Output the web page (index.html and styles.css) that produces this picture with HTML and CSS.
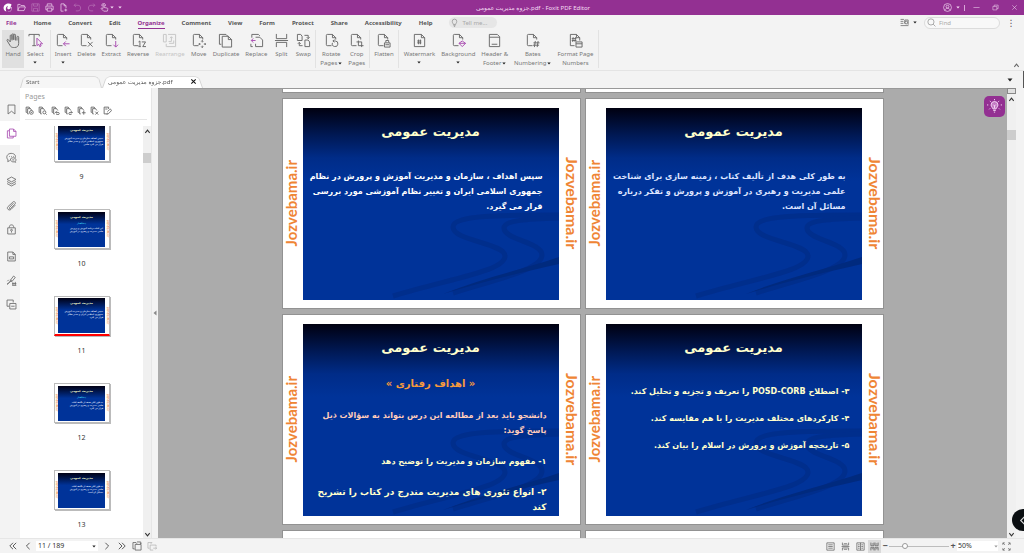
FILE: index.html
```html
<!DOCTYPE html>
<html lang="en">
<head>
<meta charset="utf-8">
<title>جزوه مدیریت عمومی.pdf - Foxit PDF Editor</title>
<link rel="stylesheet" href="styles.css">
</head>
<body>
<svg class="defs" aria-hidden="true">
  <symbol id="doc" viewBox="0 0 16 16"><path d="M8 13.500H3.500a1 1 0 0 1-1-1v-10a1 1 0 0 1 1-1H9l3.500 3.500V7M9 1.500V5h3.500"/></symbol>
  <symbol id="caret" viewBox="0 0 6 4"><path class="fill" d="M.5.5h5L3 3.500z"/></symbol>
  <symbol id="chev-l" viewBox="0 0 10 10"><path d="M7 1 3 5l4 4"/></symbol>
  <symbol id="chev-r" viewBox="0 0 10 10"><path d="m3 1 4 4-4 4"/></symbol>
  <symbol id="dchev-l" viewBox="0 0 10 10"><path d="M5 1 1 5l4 4M9 1 5 5l4 4"/></symbol>
  <symbol id="dchev-r" viewBox="0 0 10 10"><path d="m1 1 4 4-4 4M5 1l4 4-4 4"/></symbol>
  <symbol id="up" viewBox="0 0 8 8"><path d="m1.500 5.500 2.500-3 2.500 3"/></symbol>
  <symbol id="down" viewBox="0 0 8 8"><path d="m1.500 2.500 2.500 3 2.500-3"/></symbol>
  <symbol id="hand" viewBox="0 0 16 16"><path d="M4.500 9.500 2.600 7.200c-.8-.9-2 0-1.400 1l3 5c.8 1.500 2 2.300 4 2.300h1c2.600 0 4.300-1.600 4.300-4.300V4.500c0-1.300-1.800-1.300-1.800 0V8M4.500 9.500V3c0-1.300 1.900-1.300 1.900 0v5M6.400 7V1.800c0-1.300 1.900-1.300 1.900 0V7.500M8.300 7V2.300c0-1.300 1.900-1.300 1.900 0V8"/></symbol>
  <symbol id="bulb" viewBox="0 0 16 16"><path d="M6 11.500C6 10 4 9 4 6a4 4 0 0 1 8 0c0 3-2 4-2 5.500zM6.200 13.500h3.600M7 15.200h2"/></symbol>
  <symbol id="swoosh" viewBox="0 0 256 192"><path d="M256 107C200 107 150 107 150 119c0 14 52 16 52 29 0 15-52 22-112 40"/><path d="M256 110c-31 1-55 2-55 10 0 12 38 14 38 27 0 15-49 25-89 38"/><path class="swoosh-strong" d="M256 149c-38 13-77 21-116 37 42-13 80-22 116-30z"/></symbol>
  <symbol id="mini" viewBox="0 0 12 12"><path d="M2.500 8.500H1.500v-7h4l2 2M5 10.500H3.500v-7H7l2 2V6"/></symbol>
</svg>

<div class="app">
<header class="titlebar">
  <div class="quick">
    <svg class="logo" viewBox="0 0 16 16"><path class="fill" d="M15 2C9-1 1 2 1 9c0 3 2 6 5 6C4 11 5 6 9 5 7 8 7 10 9 11c3 1 4-2 6-3v3c-1 3-4 5-7 4 5 2 8-2 8-7-2-1-3 1-5 1 2-1 4-4 4-7z"/></svg>
    <button aria-label="Open"><svg viewBox="0 0 16 16"><path d="M1.500 13.500v-11h4l1.500 2h6v2.500M1.500 13.500 4 7h11l-2.500 6.500z"/></svg></button>
    <button class="dim" aria-label="Save"><svg viewBox="0 0 16 16"><path d="M1.500 1.500h13v13h-13zM4.500 1.500v4h7v-4M4.500 14.500v-5h7v5"/></svg></button>
    <button aria-label="Print"><svg viewBox="0 0 16 16"><path d="M4 5V1.500h8V5M4 12H1.500V5.500h13V12H12M4 9h8v5.500H4z"/></svg></button>
    <button aria-label="New"><svg viewBox="0 0 16 16"><path d="M8 14.500H3.500v-13H9L12.500 5v4M9 1.500V5h3.500M12 10v5M9.500 12.500h5"/></svg></button>
    <button class="dim" aria-label="Undo"><svg viewBox="0 0 16 16"><path d="M5 1 2 4l3 3M2 4h7c6 0 6 10 0 10H5"/></svg></button>
    <button class="dim" aria-label="Redo"><svg viewBox="0 0 16 16"><path d="m11 1 3 3-3 3M14 4H7C1 4 1 14 7 14h4"/></svg></button>
    <button class="touch" aria-label="Touch mode"><svg viewBox="0 0 16 16"><path d="M5.500 9.500V4c0-1.500 2-1.500 2 0v4l5 1c1.500.3 1.500 1 1.200 2.500l-.7 3H6.500L2 10c0-1.200 1.500-1.500 3.500.5M3.500 5.500C2-1 11-1 9.500 5.500"/></svg><svg class="car"><use href="#caret"/></svg></button>
    <button class="narrow" aria-label="Customize"><svg class="car"><use href="#caret"/></svg></button>
  </div>
  <h1 class="wintitle">جزوه مدیریت عمومی.pdf - Foxit PDF Editor</h1>
  <div class="wincontrols">
    <button aria-label="Account"><svg viewBox="0 0 16 16"><circle cx="8" cy="8" r="7"/><circle cx="8" cy="6.500" r="2.500"/><path d="M3.500 13c1-5 8-5 9 0"/></svg></button>
    <svg class="car"><use href="#caret"/></svg><span class="bar"></span>
    <button aria-label="Minimize"><svg viewBox="0 0 16 16"><path d="M1 8h14"/></svg></button>
    <button aria-label="Restore"><svg viewBox="0 0 16 16"><path d="M2 5.500h9v8H2zM5 5.500v-3h9v8h-3"/></svg></button>
    <button aria-label="Close"><svg viewBox="0 0 16 16"><path d="m3 3 10 10M13 3 3 13"/></svg></button>
  </div>
</header>

<nav class="menubar">
  <button class="file">File</button><button>Home</button><button>Convert</button><button>Edit</button><button class="active">Organize</button><button>Comment</button><button>View</button><button>Form</button><button>Protect</button><button>Share</button><button>Accessibility</button><button>Help</button>
  <label class="tellme"><svg class="ic"><use href="#bulb"/></svg><input type="text" placeholder="Tell me..." aria-label="Tell me"></label>
  <div class="search">
    <svg class="ic" viewBox="0 0 16 16"><path d="M1 2.500h6M1 6h5M1 9.500h5M1 13.500h14M14.500 12V3.500h-6V10"/><circle cx="11" cy="8" r="2.500"/></svg><svg class="car"><use href="#caret"/></svg>
    <label class="find"><svg class="ic" viewBox="0 0 16 16"><circle cx="7" cy="7" r="5.500"/><path d="m11 11 4 4"/></svg><input type="text" placeholder="Find" aria-label="Find"></label>
    <button class="dots" aria-label="More">⋮</button>
  </div>
</nav>

<div class="ribbon">
  <div class="group">
    <button class="tool selected"><svg><use href="#hand"/></svg>Hand</button>
    <button class="tool"><svg viewBox="0 0 16 16"><path d="M1 3.500v-2h11v2M6.500 1.500v12M4.500 13.500h4"/><path class="accent" d="M9.500 5.500v8l2-1.500 1 2.500 1.500-.7-1-2.300h2.500z"/></svg>Select<svg class="car"><use href="#caret"/></svg></button>
  </div>
  <div class="group">
    <button class="tool"><svg viewBox="0 0 16 16"><use href="#doc"/><path class="accent" d="M15.500 11.500H9M11.500 9 9 11.500l2.500 2.500"/></svg>Insert<svg class="car"><use href="#caret"/></svg></button>
    <button class="tool"><svg viewBox="0 0 16 16"><use href="#doc"/><path d="m9.500 9.500 5 5M14.500 9.500l-5 5"/></svg>Delete</button>
    <button class="tool"><svg viewBox="0 0 16 16"><use href="#doc"/><path class="accent" d="M12.500 8.500V15M10 12.500l2.500 2.500 2.500-2.500"/></svg>Extract</button>
    <button class="tool"><svg viewBox="0 0 16 16"><use href="#doc"/><path d="m8 9.500 1.500-1V14M11.500 9.500h4l-3 5h3.500M8 14.500h2.500"/></svg>Reverse</button>
    <button class="tool disabled" disabled><svg viewBox="0 0 16 16"><path d="M1.500 1.500h3v8h-3zM6.500 1.500h8v13h-10v-3M7 9h3V4M8.500 5.500 10 4l1.500 1.500M12.500 8v3h-5"/></svg>Rearrange</button>
    <button class="tool"><svg viewBox="0 0 16 16"><use href="#doc"/><path d="M12 8v2M12 13.500v2M8.300 11.800h2M13.700 11.800h2M11 9l1-1 1 1M11 14.500l1 1 1-1M9.300 10.800l-1 1 1 1M14.700 10.800l1 1-1 1"/></svg>Move</button>
    <button class="tool"><svg viewBox="0 0 16 16"><path d="M3.500 12h-2V1.500h7l2 2M4.500 3.500H11l3.500 3.500v8h-10zM11 3.500V7h3.500"/></svg>Duplicate</button>
    <button class="tool"><svg viewBox="0 0 16 16"><path d="M3 5V1.500h7l1.500 1.500M7 4.500h4.500l3 3v7H7v-3M4 14.500H2v-3"/><path class="accent" d="M7 8H2.500M4.500 5.800 2.500 8l2 2.200"/></svg>Replace</button>
    <button class="tool"><svg viewBox="0 0 16 16"><path d="M2.500 1v5h11V1M2.500 15v-5h11v5M1 8h14"/></svg>Split</button>
    <button class="tool"><svg viewBox="0 0 16 16"><path d="M1.500 1.500H5l1.500 2V8h-5zM9.500 7.500H13l1.500 2v5h-5zM9 2.500h4V6M11.500 4.500 13 6l1.500-1.500M7 13.500H3.500V10M2 11.500 3.500 10 5 11.500"/></svg>Swap</button>
  </div>
  <div class="group">
    <button class="tool"><svg viewBox="0 0 16 16"><use href="#doc"/><path d="M9 10.500a3 3 0 1 0 3-2H9.500M11 7 9.500 8.500 11 10"/></svg>Rotate<span>Pages<svg class="car"><use href="#caret"/></svg></span></button>
    <button class="tool"><svg viewBox="0 0 16 16"><use href="#doc"/><path d="M10 8v5.500h5.500M8 9.500h5.500V15"/></svg>Crop<span>Pages</span></button>
  </div>
  <div class="group">
    <button class="tool"><svg viewBox="0 0 16 16"><use href="#doc"/><path d="M9 15v-4.500h6V15zM10.500 10V8h3v2M10 12.500h4"/></svg>Flatten</button>
  </div>
  <div class="group wide">
    <button class="tool"><svg viewBox="0 0 16 16"><path d="M2.500 1.500H10L13.500 5v9.500h-11zM10 1.500V5h3.500M5.500 8.500h4.500M5.500 10.500h4.500M7 7v5M9 7v5"/></svg>Watermark<svg class="car"><use href="#caret"/></svg></button>
    <button class="tool"><svg viewBox="0 0 16 16"><use href="#doc"/><path class="accent" d="m12 8.500 3.500 2.500-3.500 3.500-3.500-3.500zM8.500 11h7"/></svg>Background<svg class="car"><use href="#caret"/></svg></button>
    <button class="tool"><svg viewBox="0 0 16 16"><path d="M2.500 1.500H11l2.500 2.500v10.500h-11zM2.500 4.500h11M5 12h6"/></svg>Header &amp;<span>Footer<svg class="car"><use href="#caret"/></svg></span></button>
    <button class="tool"><svg viewBox="0 0 16 16"><use href="#doc"/><path d="M9 10.500h6.500M8.500 13h6.500M11 8.500l-1 6.500M14 8.500l-1 6.500"/></svg>Bates<span>Numbering<svg class="car"><use href="#caret"/></svg></span></button>
    <button class="tool"><svg viewBox="0 0 16 16"><path d="M7 13.500H2.500v-12H9L12.500 5v3M9 1.500V5h3.500M4 6h5M4 8h5M5.500 4.500 5 9.500M8 4.500 7.500 9.500M8.500 9.500h6.500v5.500H8.500zM8.500 11.500H15"/></svg>Format Page<span>Numbers</span></button>
  </div>
  <button class="collapse" aria-label="Collapse ribbon"><svg><use href="#up"/></svg></button>
</div>

<div class="tabs">
  <div class="tab"><button>Start</button></div>
  <div class="tab current"><button>جزوه مدیریت عمومی.pdf</button><button class="close" aria-label="Close tab"><svg viewBox="0 0 8 8"><path d="m1.500 1.500 5 5M6.500 1.500l-5 5"/></svg></button></div>
  <button class="tabmenu" aria-label="Tab list"><svg class="car"><use href="#caret"/></svg></button>
</div>

<main class="work">
  <nav class="rail">
    <button aria-label="Bookmarks"><svg viewBox="0 0 16 16"><path d="M3 1.500h10v13l-5-4-5 4z"/></svg></button>
    <button class="on" aria-label="Pages"><svg viewBox="0 0 16 16"><path d="M4.500 4H2v10.500h8.500V12M5 1.500h6L14.500 5v7H5zM11 1.500V5h3.500"/></svg></button>
    <button aria-label="Comments"><svg viewBox="0 0 16 16"><path d="M3 11.500c-4-4-1-9.500 4.500-9.500C13 2 15 6 13 9M3 11.500 2.500 14 5.500 12.500M6.500 10c1.500-2.500 8-2 8 1.500 0 1-.5 1.500-1 2l.5 1.500-2-.7C9 15 6 13 6.500 10zM4.500 6.500h1M7.500 6.500h1M10.500 6.500h1M9 11.500h3"/></svg></button>
    <button aria-label="Layers"><svg viewBox="0 0 16 16"><path d="m8 1.500 6.500 3.500L8 8.500 1.500 5zM1.500 8 8 11.500 14.500 8M1.500 11 8 14.500l6.500-3.500"/></svg></button>
    <button aria-label="Attachments"><svg viewBox="0 0 16 16"><path d="m11 4.500-6 6.500c-1 1 .5 2.500 1.500 1.500L13 6c2-2-1-5-3-3L3 9.500c-3 3 1.500 7 4.500 4l6-6"/></svg></button>
    <button aria-label="Security"><svg viewBox="0 0 16 16"><path d="M2.500 5.500h11v9h-11zM5 5V3.500c0-3 6-3 6 0V5M8 10.500v2"/><circle cx="8" cy="9" r="1.300"/></svg></button>
    <button class="gap" aria-label="Fields"><svg viewBox="0 0 16 16"><path d="M2.500 1.500H10L13.500 5v9.500h-11zM10 1.500V5h3.500M5 8.500h6v3H5z"/></svg></button>
    <button aria-label="Signatures"><svg viewBox="0 0 16 16"><path d="M1.500 13.500c3-1 5-4 5-6L11 1.500l2.500 2L9 9c-3 0-5 2-7.500 4.500zM6.500 7.500 9 9M2 9l2-2M9 12.500h6M9 15h6M10 10.500v4.500M13.500 10v5"/></svg></button>
    <button aria-label="Compare"><svg viewBox="0 0 16 16"><path d="M5 10.500H1.500v-9h9V5M5.500 6.500h9v8h-9zM7.500 10.500h5"/></svg></button>
  </nav>
  <aside class="panel">
    <div class="panelhead">
      <h2>Pages</h2>
      <div class="minis">
        <button aria-label="Enlarge"><svg viewBox="0 0 12 12"><use href="#mini"/><circle cx="8.500" cy="8.500" r="2.500"/><path d="M7.500 8.500h2"/></svg></button>
        <button aria-label="Reduce"><svg viewBox="0 0 12 12"><use href="#mini"/><circle cx="8.500" cy="8.500" r="2"/><path d="m10 10 1.500 1.500"/></svg></button>
        <button aria-label="Rotate left"><svg viewBox="0 0 12 12"><use href="#mini"/><path d="M6 8.500h3.500c2 0 2 3 0 3H7M7.500 7 6 8.500 7.500 10"/></svg></button>
        <button aria-label="Rotate right"><svg viewBox="0 0 12 12"><use href="#mini"/><path d="M11 8.500H8c-2 0-2 3 0 3h2M9.500 7 11 8.500 9.500 10"/></svg></button>
        <button aria-label="Insert page"><svg viewBox="0 0 12 12"><use href="#mini"/><path d="M9 6.500v5M6.500 9h5"/></svg></button>
        <button aria-label="Delete page"><svg viewBox="0 0 12 12"><use href="#mini"/><path d="m7 7.500 4 4M11 7.500l-4 4"/></svg></button>
        <button aria-label="Page properties"><svg viewBox="0 0 12 12"><path d="M5 10.500H1.500v-9h6V4M6 9l-1 2 2-.5 4-4c1-1-1-3-2-2l-3 3M3 4h3"/></svg></button>
      </div>
    </div>
    <div class="panelbody">
      <ul class="thumbs">
        <li><div class="thumb"><i>Jozvebama.ir</i><div class="tslide"><b>مدیریت عمومی</b><p>سپس اهداف سازمان و مدیریت آموزش<br>جمهوری اسلامی ایران و تغییر نظام<br>قرار می گیرد علمی</p></div><i>Jozvebama.ir</i></div>9</li>
        <li><div class="thumb"><i>Jozvebama.ir</i><div class="tslide"><b>مدیریت عمومی</b><em>پیشگفتار</em><p>این کتاب برنامه آموزش و پرورش<br>علمی مدیریت و رهبری در آموزش</p></div><i>Jozvebama.ir</i></div>10</li>
        <li><div class="thumb marked"><i>Jozvebama.ir</i><div class="tslide"><b>مدیریت عمومی</b><p>سپس اهداف سازمان و مدیریت آموزش<br>جمهوری اسلامی ایران و تغییر نظام<br>قرار می گیرد</p></div><i>Jozvebama.ir</i></div>11</li>
        <li><div class="thumb"><i>Jozvebama.ir</i><div class="tslide"><b>مدیریت عمومی</b><em>پیشگفتار</em><p>به طور کلی هدف از تألیف کتاب<br>علمی مدیریت و رهبری در آموزش<br>قرار می گیرد</p></div><i>Jozvebama.ir</i></div>12</li>
        <li><div class="thumb"><i>Jozvebama.ir</i><div class="tslide"><b>مدیریت عمومی</b><p>به طور کلی هدف از تألیف کتاب<br>علمی مدیریت و رهبری در آموزش<br>مسائل آن است</p></div><i>Jozvebama.ir</i></div>13</li>
      </ul>
      <div class="scroll"><svg><use href="#up"/></svg><span class="grip"></span><svg class="end"><use href="#down"/></svg></div>
    </div>
  </aside>
  <button class="splitter" aria-label="Collapse panel"><svg viewBox="0 0 4 6"><path class="fill" d="M3.500.5v5L.5 3z"/></svg></button>

  <section class="canvas">
    <div class="spread">
      <div class="page stub"></div><div class="page stub"></div>
      <article class="page">
        <span class="mark left">Jozvebama.ir</span>
        <div class="slide" dir="rtl" lang="fa"><svg class="wave"><use href="#swoosh"/></svg>
          <h3>مدیریت عمومی</h3>
          <p class="body">سپس اهداف ، سازمان و مدیریت آموزش و پرورش در نظام<br>جمهوری اسلامی ایران و تغییر نظام آموزشی مورد بررسی<br>قرار می گیرد.</p>
        </div>
        <span class="mark right">Jozvebama.ir</span>
      </article>
      <article class="page">
        <span class="mark left">Jozvebama.ir</span>
        <div class="slide" dir="rtl" lang="fa"><svg class="wave"><use href="#swoosh"/></svg>
          <h3>مدیریت عمومی</h3>
          <p class="body pale">به طور کلی هدف از تألیف کتاب ، زمینه سازی برای شناخت<br>علمی مدیریت و رهبری در آموزش و پرورش و تفکر درباره<br>مسائل آن است.</p>
        </div>
        <span class="mark right">Jozvebama.ir</span>
      </article>
      <article class="page">
        <span class="mark left">Jozvebama.ir</span>
        <div class="slide" dir="rtl" lang="fa"><svg class="wave"><use href="#swoosh"/></svg>
          <h3>مدیریت عمومی</h3>
          <h4>« اهداف رفتاری »</h4>
          <p class="intro">دانشجو باید بعد از مطالعه این درس بتواند به سؤالات ذیل<br>پاسخ گوید:</p>
          <p class="goal">۱- مفهوم سازمان و مدیریت را توضیح دهد</p>
          <p class="goal large">۲- انواع تئوری های مدیریت مندرج در کتاب را تشریح<br>کند</p>
        </div>
        <span class="mark right">Jozvebama.ir</span>
      </article>
      <article class="page">
        <span class="mark left">Jozvebama.ir</span>
        <div class="slide" dir="rtl" lang="fa"><svg class="wave"><use href="#swoosh"/></svg>
          <h3>مدیریت عمومی</h3>
          <div class="items">
            <p>۳- اصطلاح <bdi>POSD-CORB</bdi> را تعریف و تجزیه و تحلیل کند.</p>
            <p>۴- کارکردهای مختلف مدیریت را با هم مقایسه کند.</p>
            <p>۵- تاریخچه آموزش و پرورش در اسلام را بیان کند.</p>
          </div>
        </div>
        <span class="mark right">Jozvebama.ir</span>
      </article>
      <div class="page next"></div><div class="page next"></div>
    </div>
    <button class="hint" aria-label="Assistant"><svg viewBox="0 0 24 24"><path class="glow" d="M9.500 16c0-2-3-3-3-6.500a5.500 5.500 0 0 1 11 0c0 3.500-3 4.500-3 6.500z"/><path d="M10 18.500h4M11 21h2M12 0v2M2 9.500H0M24 9.500h-2M4.500 3 6 4.500M19.500 3 18 4.500M5 15l-1.500 1.500M19 15l1.500 1.500M12 15v-4l-2-2M12 11l2-2"/></svg></button>
  </section>
  <div class="scroll docscroll"><span class="split"></span><svg><use href="#up"/></svg><span class="grip"></span><svg class="end"><use href="#down"/></svg></div>
  <div class="edge"><button class="bubble" aria-label="Expand"><svg><use href="#chev-l"/></svg></button></div>
</main>

<footer class="status">
  <div class="pager">
    <button aria-label="First page"><svg><use href="#dchev-l"/></svg></button>
    <button aria-label="Previous page"><svg><use href="#chev-l"/></svg></button>
    <label class="combo"><input type="text" value="11 / 189" aria-label="Page number"><svg class="car"><use href="#caret"/></svg></label>
    <button aria-label="Next page"><svg><use href="#chev-r"/></svg></button>
    <button aria-label="Last page"><svg><use href="#dchev-r"/></svg></button>
    <button aria-label="Previous view"><svg viewBox="0 0 16 16"><path d="M4 12.500H1.500v-10h5l1.500 2M5 5.500h9.500v9H5zM8 1.500h6V4M12.500 3 14 4.500 15.500 3"/></svg></button>
    <button class="off" aria-label="Next view"><svg viewBox="0 0 16 16"><path d="M6 4.500 8 2.500H1.500v9H4M14.500 9V6.500H5v8h5M10 11.500h5.500M13.500 9.500l2 2-2 2"/></svg></button>
  </div>
  <div class="views">
    <button aria-label="Single page"><svg viewBox="0 0 16 16"><path d="M1.500 1.500h13v13h-13zM4 5h8M4 8h8M4 11h8"/></svg></button>
    <button aria-label="Continuous"><svg viewBox="0 0 16 16"><path d="M2.500 1v4.500h11V1M5 3h6M1 8h14M2.500 15v-4.500h11V15M5 13h6"/></svg></button>
    <button aria-label="Facing"><svg viewBox="0 0 16 16"><path d="M1.500 1.500h13v13h-13zM8 1.500v13M3.500 5h3M3.500 8h3M3.500 11h3M9.500 5h3M9.500 8h3M9.500 11h3"/></svg></button>
    <button class="on" aria-label="Continuous facing"><svg viewBox="0 0 16 16"><path d="M1.500 1v5.500h5.500V1M9 1v5.500h5.500V1M1.500 15V9.500h5.500V15M9 15V9.500h5.500V15M3 3.500h3M10.500 3.500h3M3 12h3M10.500 12h3"/></svg></button>
    <button class="step" aria-label="Zoom out">−</button>
    <input class="zoom" type="range" min="0" max="100" value="24" aria-label="Zoom">
    <button class="step" aria-label="Zoom in">+</button>
    <span class="zoomsel"><select aria-label="Zoom level"><option>50%</option></select><svg class="car"><use href="#caret"/></svg></span>
    <button aria-label="Full screen"><svg viewBox="0 0 16 16"><path d="M1.500 5V1.500H5M11 1.500h3.500V5M14.500 11v3.500H11M5 14.500H1.500V11M2 2l3 3M14 2l-3 3M14 14l-3-3M2 14l3-3"/></svg></button>
  </div>
</footer>
</div>
</body>
</html>
```
FILE: styles.css
```css
* { box-sizing: border-box; }
body {
  margin: 0;
  font: 6px/8px "Noto Sans", "DejaVu Sans", sans-serif;
  color: #666;
  background: #f3f3f3;
}
button, input, select {
  font: inherit;
  color: inherit;
  background: none;
  border: 0;
  padding: 0;
  margin: 0;
}
button { display: flex; align-items: center; justify-content: center; }
h1, h2, h3, h4, p, ul { margin: 0; padding: 0; font-size: inherit; }
input { outline: 0; min-width: 0; }
svg { fill: none; stroke: currentColor; stroke-width: 1.2; display: block; flex: none; }
.defs { position: absolute; width: 0; height: 0; }
.fill { fill: currentColor; stroke: none; }
.accent { stroke: #a84bb0; }
.car { width: 4px; height: 3px; color: #222; }
.ic { width: 9px; height: 9px; }
.app { display: flex; flex-direction: column; height: 100vh; overflow: hidden; }

.titlebar {
  display: flex;
  align-items: center;
  height: 15px;
  flex: none;
  background: #933092;
  color: #f4dcf3;
}
.titlebar svg { width: 9px; height: 9px; }
.titlebar .car { width: 4px; height: 3px; color: #f4dcf3; }
.quick { display: flex; align-items: center; padding-left: 3px; }
.quick button { width: 14px; height: 14px; }
.quick .logo { width: 9px; height: 9px; color: #fff; margin-right: 2px; }
.quick .touch { width: 18px; gap: 1px; }
.quick .narrow { width: 8px; }
.dim { opacity: .4; }
.wintitle { flex: 1; text-align: center; font-weight: 400; }
.wincontrols { display: flex; align-items: center; gap: 4px; padding-right: 5px; }
.wincontrols button { width: 10px; margin-right: 5px; }
.wincontrols button:first-child, .wincontrols button:last-child { margin-right: 0; }
.wincontrols button svg { width: 7px; height: 7px; }
.wincontrols button:first-child svg { width: 9px; height: 9px; }
.bar { width: 1px; height: 6px; background: #d9a6d8; margin-right: 2px; }

.menubar { display: flex; align-items: center; gap: 17px; height: 15px; flex: none; padding-left: 6px; font-weight: 700; color: #555; }
.menubar > button { height: 12px; border-top: 2px solid transparent; border-bottom: 1px solid transparent; }
.menubar .file { color: #933092; }
.menubar .active { color: #933092; border-bottom-color: #933092; }
.tellme, .find { display: flex; align-items: center; gap: 3px; border-radius: 6px; font-weight: 400; color: #888; }
.tellme { width: 48px; height: 11px; background: #e6e6e6; padding-left: 1px; }
.tellme input { width: 34px; }
::placeholder { color: #a8a8a8; opacity: 1; }
.search { display: flex; align-items: center; gap: 4px; margin-left: auto; padding-right: 10px; }
.find { width: 76px; height: 12px; border: 1px solid #dcdcdc; background: #f8f8f8; padding-left: 2px; margin-left: 3px; }
.find input { width: 50px; }
.dots { width: 6px; font-size: 9px; font-weight: 400; margin-left: 4px; }

.ribbon { display: flex; height: 41px; flex: none; border-bottom: 1px solid #e4e4e4; padding-left: 2px; }
.group { display: flex; align-items: flex-start; height: 38px; padding: 0 1px; border-right: 1px solid #e2e2e2; }
.group:first-child { padding: 0 3px 0 0; }
.group.wide { padding: 0 2px; }
.tool { flex-direction: column; justify-content: flex-start; min-width: 22px; height: 38px; padding: 3px 3px 0; color: #777; line-height: 9px; white-space: nowrap; }
.tool > svg:first-child { width: 15px; height: 15px; margin-bottom: 2px; color: #666; stroke-width: 1; }
.tool .car { margin-top: 2px; }
.tool span { display: flex; align-items: center; gap: 1px; }
.tool span .car { margin: 0; }
.tool.selected { background: #e0e0e0; }
.tool.disabled, .tool.disabled > svg:first-child { color: #c4c4c4; }
.collapse { align-self: flex-end; margin-left: auto; padding: 0 4px 1px; }
.collapse svg { width: 7px; height: 7px; }

.tabs { display: flex; align-items: flex-end; height: 17px; flex: none; padding-left: 20px; border-right: 1px solid #555; }
.tab { position: relative; display: flex; align-items: center; width: 82px; height: 13px; padding: 0 6px; z-index: 0; }
.tab::before {
  content: "";
  position: absolute;
  inset: 0;
  z-index: -1;
  background: #f6f6f6;
  border: 1px solid #d5d5d5;
  border-bottom: 0;
  border-radius: 5px 5px 0 0;
  transform: perspective(20px) rotateX(8deg);
  transform-origin: bottom;
}
.tab.current { width: 101px; color: #555; justify-content: space-between; }
.tab.current::before { background: #fff; }
.tab .close svg { width: 7px; height: 7px; stroke: #111; }
.tabmenu { height: 17px; margin-left: auto; padding: 0 10px; }
.tabmenu .car { width: 6px; height: 4px; }

.work { display: flex; flex: 1; min-height: 0; }
.rail { width: 20px; padding-top: 9px; flex: none; }
.rail button { width: 20px; height: 24px; padding-left: 2px; }
.rail svg { width: 11px; height: 11px; stroke-width: 1.2; }
.rail .on { background: #fff; color: #a84bb0; }
.rail .gap { margin-top: 3px; }
.panel { display: flex; flex-direction: column; width: 131px; background: #fff; flex: none; }
.panelhead { margin: 5px 4px 0 5px; height: 27px; border-bottom: 1px solid #e6e6e6; flex: none; }
.panelhead h2 { font-weight: 400; font-size: 7px; color: #999; }
.minis { display: flex; gap: 4px; padding-top: 5px; }
.minis svg { width: 9px; height: 9px; }
.panelbody { display: flex; flex: 1; min-height: 0; margin-top: 6px; }
.thumbs { flex: 1; display: flex; flex-direction: column; justify-content: flex-end; gap: 26px; padding-bottom: 7px; overflow: hidden; list-style: none; text-align: center; font-size: 7px; color: #333; }
.thumbs li { display: flex; flex-direction: column; align-items: center; gap: 10px; height: 61px; flex: none; line-height: 10px; }
.thumb { display: flex; justify-content: space-between; align-items: center; width: 56px; height: 40px; flex: none; border: 1px solid #bbb; background: #fff; box-shadow: 1px 1px 0 #bbb; }
.thumb.marked { border-bottom: 2px solid #f00; }
.thumb i { writing-mode: vertical-rl; font: 700 3px/3px Lato, sans-serif; color: #ef8535; }
.tslide { width: 47px; height: 35px; overflow: hidden; direction: rtl; text-align: center; background: linear-gradient(#000014, #003399 35%); font: 700 2px/2px "DejaVu Sans", sans-serif; color: #e8eefc; }
.tslide b { display: block; font-size: 3px; line-height: 10px; color: #ffc; }
.tslide em { display: block; font-style: normal; line-height: 3px; color: #3cc8e8; }
.tslide p { padding: 2px 2px; text-align: right; line-height: 3px; white-space: nowrap; }
.scroll { display: flex; flex-direction: column; align-items: center; width: 8px; background: #f0f0f0; flex: none; color: #333; }
.scroll svg { width: 7px; height: 7px; margin-top: 2px; }
.scroll .grip { width: 8px; height: 10px; margin-top: 18px; background: #cdcdcd; }
.scroll .end { margin-top: auto; }
.splitter { width: 7px; flex: none; border-left: 1px solid #e6e6e6; color: #888; }
.splitter svg { width: 4px; height: 6px; }

.canvas { position: relative; flex: 1; min-width: 0; overflow: hidden; background: #ababab; border-top: 1px solid #999; }
.spread { display: grid; grid-template-columns: max-content max-content; justify-content: center; gap: 5px 4px; }
.page { display: grid; grid-template-columns: 20px 256px 21px; align-items: center; height: 211px; background: #fff; border: 1px solid #929292; }
.page.stub { height: 4px; border-top: 0; }
.page.next { height: 20px; }
.mark { justify-self: start; writing-mode: vertical-rl; font: 700 15px/16px Lato, "Noto Sans", sans-serif; color: #ef8535; }
.mark.left { transform: rotate(180deg); }
.mark.right { justify-self: end; font-size: 16px; }
.slide { position: relative; height: 192px; overflow: hidden; padding: 12px 12px 0; background: linear-gradient(#000010, #001a58 15%, #002c88 26%, #003399 38%); font: 700 8px/15px "DejaVu Sans", sans-serif; color: #ffc; white-space: nowrap; }
.slide > * { position: relative; }
.slide > .wave { position: absolute; inset: 0; width: 100%; height: 100%; }
.wave { stroke: #002d8a; stroke-width: 5; opacity: .8; }
.swoosh-strong { fill: #002878; stroke: none; }
.slide h3 { font-size: 13px; line-height: 24px; text-align: center; }
.slide h4 { font-size: 10px; line-height: 20px; padding-top: 14px; text-align: center; color: #f79a3c; }
.slide .body { padding: 25px 4px 0; color: #fff; }
.slide .pale { color: #dde4ff; }
.slide .intro { padding-top: 14px; color: #fcb; }
.slide .goal { padding-top: 16px; }
.slide .large { font-size: 9px; }
.slide .items { display: grid; gap: 12px; padding-top: 24px; }
.hint { position: absolute; top: 7px; right: 2px; width: 21px; height: 21px; border-radius: 5px; background: #933092; color: #f6d9f6; }
.hint svg { width: 15px; height: 15px; stroke-width: 1.5; }
.glow { fill: #c27ac2; }
.docscroll { width: 9px; }
.docscroll .split { width: 9px; height: 6px; border: 1px solid #888; background: #e0e0e0; }
.docscroll .grip { width: 9px; margin-top: 27px; }
.edge { position: relative; width: 8px; flex: none; }
.bubble { position: absolute; right: -10px; bottom: 7px; width: 22px; height: 22px; border-radius: 50%; background: #0b0f12; color: #ddd; justify-content: flex-start; padding-left: 6px; }
.bubble svg { width: 9px; height: 9px; }

.status { display: flex; align-items: center; justify-content: space-between; height: 15px; flex: none; border-top: 1px solid #e6e6e6; color: #555; }
.pager, .views { display: flex; align-items: center; }
.pager { padding-left: 5px; }
.pager button { width: 15px; height: 12px; }
.pager svg { width: 8px; height: 8px; }
.pager button:nth-last-child(-n+2) svg { width: 10px; height: 10px; }
.pager .off { opacity: .4; }
.combo { display: flex; align-items: center; width: 62px; height: 10px; background: #fff; padding: 0 2px; margin: 0 1px; font-size: 7px; color: #333; }
.combo input { flex: 1; }
.combo .car, .zoomsel .car { width: 4px; height: 3px; }
.zoomsel .car { color: #999; }
.views { padding-right: 10px; }
.views button { width: 15px; height: 13px; }
.views svg { width: 9px; height: 9px; }
.views .on { background: #dadada; width: 13px; }
.views .step { width: 8px; font-weight: 700; font-size: 9px; }
.zoom { appearance: none; width: 60px; height: 8px; }
.zoom::-webkit-slider-runnable-track { height: 1px; background: #bdbdbd; }
.zoom::-webkit-slider-thumb { appearance: none; width: 6px; height: 6px; margin-top: -3px; border: 1px solid #999; border-radius: 50%; background: #fff; }
.zoomsel { display: flex; align-items: center; width: 41px; height: 10px; background: #fff; color: #333; }
.zoomsel select { appearance: none; flex: 1; font-size: 7px; padding-left: 1px; }
.zoomsel + button { margin-left: 1px; }
```
